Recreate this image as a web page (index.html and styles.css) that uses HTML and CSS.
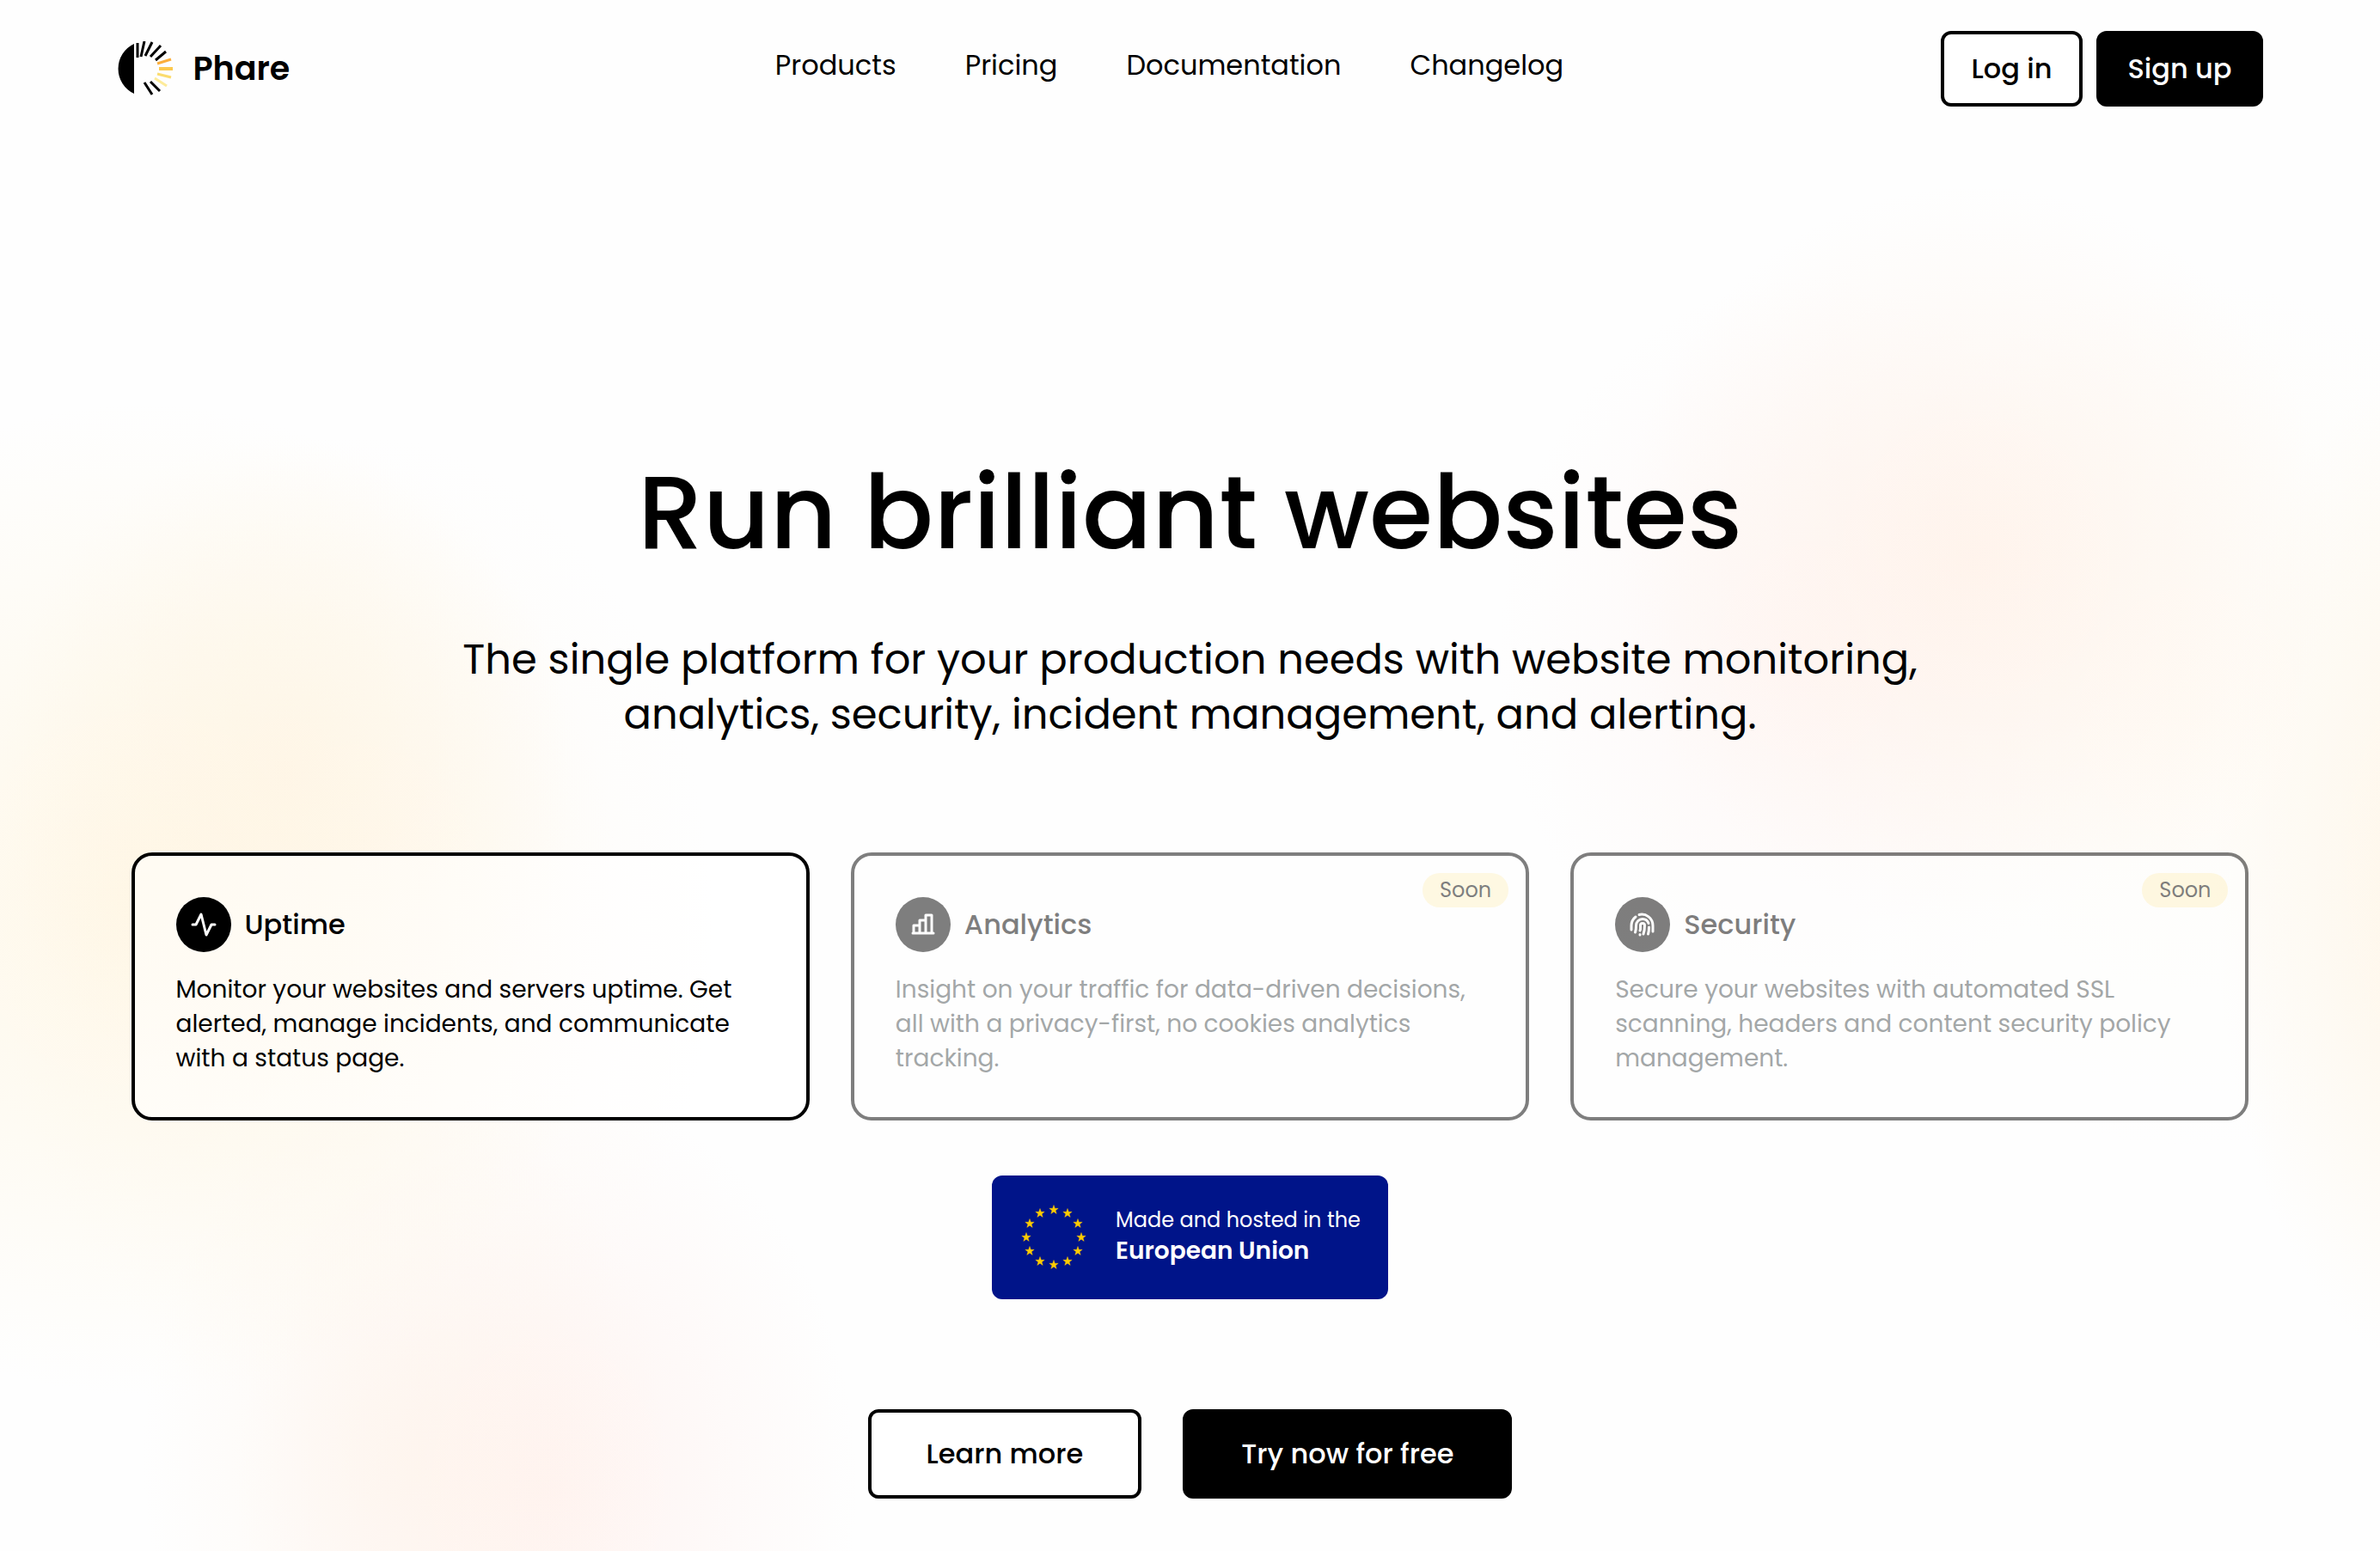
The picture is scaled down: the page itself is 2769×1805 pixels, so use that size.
FILE: index.html
```html
<!DOCTYPE html>
<html lang="en">
<head>
<meta charset="utf-8">
<meta name="viewport" content="width=device-width, initial-scale=1">
<title>Phare</title>
<link rel="stylesheet" href="styles.css">
</head>
<body>
<header class="header">
  <a class="brand" href="#">
    <svg class="brand-mark" viewBox="0 0 64 64" aria-hidden="true">
      <path d="M19 3A32 32 0 0 0 19 61Z"/>
      <g fill="none" stroke="#000" stroke-width="3">
        <path d="M23 19V2M27 18L31 0M32 17L40 1M38 18L50 5M44 22L56 12M31 48L40 62M38 47L49 58"/>
        <path stroke="#fbae3c" d="M46 26L62 21"/>
        <path stroke="#fcc94f" stroke-width="4" d="M48 32H64"/>
        <path stroke="#fbdc6e" d="M46 38L62 42"/>
        <path stroke="#fdeb9a" d="M43 43L57 52"/>
      </g>
    </svg>
    <span>Phare</span>
  </a>
  <nav class="nav" aria-label="Main">
    <a href="#">Products</a>
    <a href="#">Pricing</a>
    <a href="#">Documentation</a>
    <a href="#">Changelog</a>
  </nav>
  <div class="account">
    <button class="button" type="button">Log in</button>
    <button class="button button-solid" type="button">Sign up</button>
  </div>
</header>
<main class="hero">
  <h1 class="title">Run brilliant websites</h1>
  <p class="lead">The single platform for your production needs with website monitoring, analytics, security, incident management, and alerting.</p>
  <div class="cards">
    <article class="card">
      <div class="card-head">
        <svg class="card-icon" viewBox="0 0 64 64" aria-hidden="true"><circle cx="32" cy="32" r="32"/><path d="M19 32h4l6-12 6 24 6-12h4"/></svg>
        <h2>Uptime</h2>
      </div>
      <p>Monitor your websites and servers uptime. Get alerted, manage incidents, and communicate with a status page.</p>
    </article>
    <article class="card card-soon">
      <span class="badge">Soon</span>
      <div class="card-head">
        <svg class="card-icon" viewBox="0 0 64 64" aria-hidden="true"><circle cx="32" cy="32" r="32"/><path d="M20 42h24M21 42V33h7v9M28 42V27h7v15M35 42V21h7v21"/></svg>
        <h2>Analytics</h2>
      </div>
      <p>Insight on your traffic for data-driven decisions, all with a privacy-first, no cookies analytics tracking.</p>
    </article>
    <article class="card card-soon">
      <span class="badge">Soon</span>
      <div class="card-head">
        <svg class="card-icon" viewBox="0 0 64 64" aria-hidden="true"><circle cx="32" cy="32" r="32"/><path d="M19 38v-5a13 13 0 0 1 5-10M28 20.500a13 13 0 0 1 16 12.500v7M23.500 41c1-3 1-5 1-8a7.500 7.500 0 0 1 7.500-7.500 7.500 7.500 0 0 1 7 5M39.500 35c0 3 0 5-1 8M29 39c1-2 .500-4 .500-6a2.500 2.500 0 0 1 5 0c0 3 0 6-1.500 10M29 44v-.500"/></svg>
        <h2>Security</h2>
      </div>
      <p>Secure your websites with automated SSL scanning, headers and content security policy management.</p>
    </article>
  </div>
  <div class="eu">
    <svg class="eu-stars" viewBox="-40 -40 80 80" aria-hidden="true">
      <defs><path id="star" d="M0-5.500L1.300-1.800 5.200-1.700 2.100.700 3.200 4.400 0 2.200-3.200 4.400-2.100.700-5.200-1.700-1.300-1.800Z"/></defs>
      <g fill="#fc0" stroke="#fc0" stroke-width=".4">
        <use href="#star" y="-32"/><use href="#star" x="16" y="-28"/><use href="#star" x="28" y="-16"/><use href="#star" x="32"/>
        <use href="#star" x="28" y="16"/><use href="#star" x="16" y="28"/><use href="#star" y="32"/><use href="#star" x="-16" y="28"/>
        <use href="#star" x="-28" y="16"/><use href="#star" x="-32"/><use href="#star" x="-28" y="-16"/><use href="#star" x="-16" y="-28"/>
      </g>
    </svg>
    <p>Made and hosted in the<strong>European Union</strong></p>
  </div>
  <div class="actions">
    <button class="button button-large" type="button">Learn more</button>
    <button class="button button-large button-solid" type="button">Try now for free</button>
  </div>
</main>
</body>
</html>
```
FILE: styles.css
```css
* { box-sizing: border-box; }

body {
  margin: 0;
  min-height: 100vh;
  color: #000;
  font-family: Poppins, Inter, sans-serif;
  font-size: 32px;
  line-height: 48px;
  background:
    radial-gradient(ellipse 12% 22% at 12% 50%, rgb(255 244 226 / 60%), transparent),
    radial-gradient(ellipse 20% 32% at 6% 58%, rgb(255 246 226 / 80%), transparent),
    radial-gradient(ellipse 15% 32% at 15% 60%, rgb(255 249 242 / 80%), transparent),
    radial-gradient(ellipse 11% 24% at 17% 94%, rgb(255 242 230 / 50%), transparent),
    radial-gradient(ellipse 13% 26% at 23% 96%, rgb(255 241 238 / 80%), transparent),
    radial-gradient(ellipse 15% 24% at 83% 36%, rgb(255 242 233 / 80%), transparent),
    radial-gradient(ellipse 13% 24% at 76% 42%, rgb(255 244 242 / 70%), transparent),
    radial-gradient(ellipse 16% 28% at 92% 46%, rgb(255 250 242 / 70%), transparent),
    radial-gradient(ellipse 9% 32% at 102% 56%, rgb(255 243 224 / 80%), transparent),
    #fefefe;
}

a { color: inherit; text-decoration: none; }
h1, h2, p { margin: 0; font-weight: 400; }

.header {
  display: grid;
  grid-template-columns: 1fr auto 1fr;
  align-items: center;
  max-width: 2496px;
  margin: 0 auto;
  padding: 36px 0;
}

.brand {
  display: flex;
  align-items: center;
  gap: 24px;
  font-size: 38px;
  font-weight: 600;
}

.brand-mark { width: 64px; height: 64px; }
.nav { display: flex; gap: 80px; padding: 0 48px 8px 0; }
.account { display: flex; justify-content: flex-end; gap: 16px; }

.button {
  height: 88px;
  padding: 0 32px;
  border: 4px solid #000;
  border-radius: 12px;
  background: #fff;
  color: #000;
  font: inherit;
  font-weight: 500;
}

.button-solid { background: #000; color: #fff; }
.button-large { height: 104px; padding: 0 64px; }

.hero {
  display: flex;
  flex-direction: column;
  align-items: center;
  max-width: 2464px;
  margin: 0 auto;
  padding: 340px 0 60px;
  text-align: center;
}

.title { font-size: 120px; font-weight: 500; line-height: 192px; }

.lead {
  max-width: 1792px;
  margin-top: 44px;
  font-size: 48px;
  line-height: 64px;
}

.cards {
  display: grid;
  grid-template-columns: repeat(3, 1fr);
  gap: 48px;
  width: 100%;
  margin-top: 128px;
  text-align: left;
}

.card {
  position: relative;
  padding: 48px;
  border: 4px solid #000;
  border-radius: 24px;
  background: rgb(255 255 255 / 50%);
  font-size: 28px;
  line-height: 40px;
}

.card-soon { opacity: 0.5; background: #fff; }
.card-soon p { color: #4b5254; }
.card-head { display: flex; align-items: center; gap: 16px; margin-bottom: 24px; }
.card-head h2 { font-size: 32px; font-weight: 500; }

.card-icon {
  width: 64px;
  height: 64px;
}

.card-icon path {
  fill: none;
  stroke: #fff;
  stroke-width: 3;
  stroke-linecap: round;
  stroke-linejoin: round;
}

.badge {
  position: absolute;
  top: 20px;
  right: 20px;
  padding: 0 20px;
  border-radius: 20px;
  background: #fff3c8;
  font-size: 24px;
}

.eu {
  display: flex;
  align-items: center;
  gap: 32px;
  height: 144px;
  margin-top: 64px;
  padding: 0 32px;
  border-radius: 12px;
  background: #001489;
  color: #fff;
  font-size: 24px;
  line-height: 36px;
  text-align: left;
}

.eu-stars { width: 80px; height: 80px; }
.eu p { padding-bottom: 4px; }
.eu strong { display: block; font-size: 28px; font-weight: 600; }
.actions { display: flex; gap: 48px; margin-top: 128px; }
```
